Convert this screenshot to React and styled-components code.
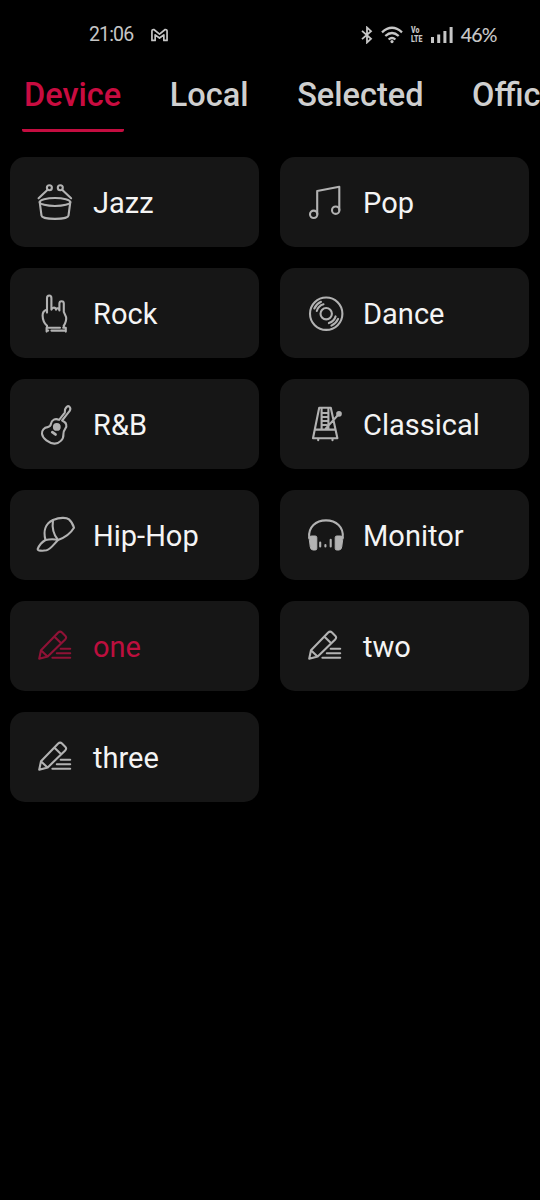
import styled, { createGlobalStyle } from "styled-components";

const GlobalStyle = createGlobalStyle`
  * {
    box-sizing: border-box;
  }
  body {
    margin: 0;
    background: #000;
    font-family: Roboto, "Liberation Sans", sans-serif;
    overflow-x: hidden;
  }
`;

const Screen = styled.div`
  width: 540px;
  height: 1200px;
  overflow: hidden;
  background: #000;
`;

const StatusBar = styled.header`
  display: flex;
  justify-content: space-between;
  align-items: center;
  height: 69px;
  padding: 0 43.5px 0 89px;
  color: #c6c6c6;
`;

const StatusGroup = styled.div`
  display: flex;
  align-items: center;
  gap: ${(props) => props.$gap};
`;

const StatusText = styled.span`
  padding-top: ${(props) => props.$drop || "0"};
  font-family: ${(props) => props.$font};
  font-size: ${(props) => props.$size};
  line-height: 24px;
  font-weight: ${(props) => props.$weight};
  letter-spacing: ${(props) => props.$spacing};
`;

const Volte = styled.span`
  display: flex;
  flex-direction: column;
  width: 11.5px;
  font-family: Roboto, sans-serif;
  font-size: 9.5px;
  font-weight: 900;
  line-height: 8.5px;
  transform: scaleX(0.74);
  transform-origin: left;
`;

const Tabs = styled.nav`
  display: flex;
  gap: 43.6px;
  height: 63px;
  padding-left: 22px;
`;

const Tab = styled.button`
  display: flex;
  flex: none;
  align-items: flex-start;
  height: 63px;
  padding: 7px 3px 0 2px;
  border: 0;
  border-bottom: 3px solid ${(props) => (props.$active ? "#c40d40" : "transparent")};
  border-radius: 2px;
  background: none;
  color: ${(props) => (props.$active ? "#c90c40" : "#cfcfcf")};
  font-family: inherit;
  font-size: 32.5px;
  font-weight: 500;
  line-height: 38px;
`;

const Grid = styled.main`
  display: grid;
  grid-template-columns: 249px 249px;
  grid-auto-rows: 90px;
  gap: 21px;
  padding: 25.4px 10.4px;
`;

const Card = styled.button`
  display: flex;
  align-items: center;
  gap: 18px;
  padding: 0 0 0 24.6px;
  border: 0;
  border-radius: 15px;
  background: #161616;
  color: ${(props) => (props.$active ? "#bd0f3e" : "#f4f4f4")};
  font-family: inherit;
  font-size: 29px;
  line-height: 34px;
  letter-spacing: 0.03px;
`;

const Label = styled.span`
  padding-top: 2px;
`;

const Icon = styled.svg`
  flex: none;
  width: 40px;
  height: 40px;
  overflow: visible;
  fill: none;
  stroke: currentColor;
  stroke-width: 2.1;
  stroke-linecap: round;
  stroke-linejoin: round;
  color: ${(props) => (props.$active ? "#8f1236" : "#b2b2b2")};
`;

const drawings = {
  drum: (
    <>
      <circle cx="14.4" cy="5.8" r="2.5" />
      <circle cx="25.3" cy="5.8" r="2.5" />
      <path d="M12.6 7.8 3.6 16.3M27.1 7.8l9 8.5" />
      <ellipse cx="20" cy="20" rx="15.3" ry="4" />
      <path d="M4.7 20l1.8 13.6C7 38 33 38 33.5 33.6L35.3 20" />
    </>
  ),
  note: (
    <>
      <circle cx="8.7" cy="32.3" r="3.7" />
      <circle cx="30.7" cy="28.2" r="3.7" />
      <path d="M12.2 32V9L34.3 4.8V28" />
    </>
  ),
  horns: (
    <g transform="translate(0 .6)">
      <path d="M12 15.8c-3.4 1.2-4.6 3.4-4.4 6.2.1 4.3 1 7.4 4.4 10.2M12 19V4.6c0-3.6 4.4-3.6 4.4 0V16c1-2.6 4.2-2.6 4.6 0 .6-2 3.2-1.6 3.4.8V10c0-3.2 4.4-3.2 4.4 0v8.3l2.3 5.2c.6 3.4-.8 6.2-2.3 8.7" />
      <path d="M11.6 38v-3.9H25M28.2 34.1h2.6V38M16.4 37H30.8M11.6 37h1.6M12 32.2v1.6M28.8 32.2v1.6" />
    </g>
  ),
  disc: (
    <>
      <circle cx="21.2" cy="20.7" r="16.2" />
      <circle cx="21.2" cy="20.7" r="5.7" />
      <path d="M11.8 18a9.8 9.8 0 0 1 6.7-6.7M9.3 15.5a13 13 0 0 1 6.7-6.7M30.6 23.4a9.8 9.8 0 0 1-6.7 6.7M33.1 25.9a13 13 0 0 1-6.7 6.7" />
    </>
  ),
  guitar: (
    <g transform="translate(.5 .5)">
      <path d="M23.6 15.4 29.3 8.2l.2-3.2q2-4.4 4.2-3 2 1.6.5 4.4l-2.4 3-5.2 6.6c4.6 2.2 5.2 5.4 3.2 8.2-1.6 2.2-2 3.4-1.9 5.6.4 4.8-4.2 9.6-9.1 9.3-5.5-.4-11.5-4.8-12.3-9.7-.5-3.3 2.2-6.4 5.7-6.8 2.2-.3 3-1.4 3.3-3.4.6-3.9 4.3-5.6 8.1-3.8z" />
      <circle cx="21.3" cy="22.4" r="2" strokeWidth="3.8" />
      <path d="M16.8 27.7l3.2 2.2" strokeWidth="2.8" />
    </g>
  ),
  metronome: (
    <>
      <path d="M14.2 3.8h11.6l6.6 30.4H8zM10 25.6h20.5M16.6 4v21M23.4 4v21M17 9h5.5M17 13h5.5M17 17h5.5M17 21h4.5M20.7 24.6 33 11M13.2 34.5v1.7M27.5 34.5v1.7" />
      <circle cx="34" cy="9.8" r="1.8" fill="currentColor" />
    </>
  ),
  cap: (
    <>
      <path d="M10.5 25C8 16 10.5 8.5 18 5c7-2.8 13.5-2.7 16-.6 2.4 2 4 5.2 5 8.4-3.4 5.6-9.4 10-16 12.2-5-1.3-8.6-.8-12.5 0z" />
      <path d="M18 5c-1.3 8.5.3 14.3 5 20M10.5 25C7 27 4 30.7 2.7 34c-.6 1.8 4.8 2 8.8 1.3 4-.9 7.7-6.6 11.5-10.3" />
    </>
  ),
  headphones: (
    <>
      <path d="M4.2 23C3 12 11 5.4 21 5.4S39 12 37.7 23" />
      <path
        d="M4.3 21.8l2.2-.8h3.8q1.5 0 1.5 1.5v11q0 1.5-1.5 1.5H8q-2.3 0-2.7-2.7zM37.7 21.8l-2.2-.8h-3.8q-1.5 0-1.5 1.5v11q0 1.5 1.5 1.5H34q2.3 0 2.7-2.7z"
        fill="currentColor"
        strokeWidth="1"
      />
      <path d="M15.2 27.5v4M20.4 30v1.5M25.7 24.8v6.7" />
    </>
  ),
  pencil: (
    <path d="M4.2 32.8 6 24.2 23.2 6.5q1.9-1.9 3.8 0l3.2 3.2q1.9 1.9 0 3.8L12.7 30.4zM6.2 24.5l6 5.8M19.5 10.7l6.7 6.5M25.7 22.8h9.5M21.8 27.2h13.4M17.4 31.8h17.8" />
  ),
};

const tabs = ["Device", "Local", "Selected", "Official"];

const presets = [
  { name: "Jazz", icon: "drum" },
  { name: "Pop", icon: "note" },
  { name: "Rock", icon: "horns" },
  { name: "Dance", icon: "disc" },
  { name: "R&B", icon: "guitar" },
  { name: "Classical", icon: "metronome" },
  { name: "Hip-Hop", icon: "cap" },
  { name: "Monitor", icon: "headphones" },
  { name: "one", icon: "pencil", active: true },
  { name: "two", icon: "pencil" },
  { name: "three", icon: "pencil" },
];

const Status = () => (
  <StatusBar>
    <StatusGroup $gap="17.5px">
      <StatusText $font="Roboto, sans-serif" $size="19.5px" $weight="400" $spacing="-0.85px" $drop="1px">
        21:06
      </StatusText>
      <svg width="17" height="14" viewBox="0 0 18 14" fill="none" stroke="currentColor" strokeWidth="1.8" strokeLinejoin="round">
        <path d="M1 12.7V3Q1 1 3 1.2L9 6l6-4.8Q17 1 17 3v9.7h-3.4V6.8L9 10.2 4.4 6.8v5.9z" />
      </svg>
    </StatusGroup>
    <StatusGroup $gap="8px">
      <svg width="12" height="18" viewBox="0 0 12 18" fill="none" stroke="currentColor" strokeWidth="1.8">
        <path d="M1 4.8l9 8L6 16.5v-15l4 3.7-9 8" />
      </svg>
      <svg width="22" height="18" viewBox="0 0 22 18" fill="none" stroke="currentColor" strokeWidth="2.3">
        <path d="M1 6.3q10-9 20 0M4.3 10q6.7-6 13.4 0M7.6 13.5q3.4-3 6.8 0" />
        <circle cx="11" cy="15.6" r="1.6" fill="currentColor" stroke="none" />
      </svg>
      <Volte>
        <span>Vo</span>
        <span>LTE</span>
      </Volte>
      <svg width="22" height="16" viewBox="0 0 22 16" fill="currentColor">
        <path d="M0 10h3v6H0zM6.2 7.5h3V16h-3zM12.4 4h3v12h-3zM18.6 0h3v16h-3z" />
      </svg>
      <StatusText $font="Lato, sans-serif" $size="19.5px" $weight="500" $spacing="-0.9px">
        46%
      </StatusText>
    </StatusGroup>
  </StatusBar>
);

const App = () => {
  return (
    <Screen>
      <GlobalStyle />
      <Status />
      <Tabs>
        {tabs.map((tab, i) => (
          <Tab key={tab} $active={i === 0}>
            {tab}
          </Tab>
        ))}
      </Tabs>
      <Grid>
        {presets.map((preset) => (
          <Card key={preset.name} $active={preset.active}>
            <Icon viewBox="0 0 40 40" $active={preset.active}>
              {drawings[preset.icon]}
            </Icon>
            <Label>{preset.name}</Label>
          </Card>
        ))}
      </Grid>
    </Screen>
  );
};

export default App;
